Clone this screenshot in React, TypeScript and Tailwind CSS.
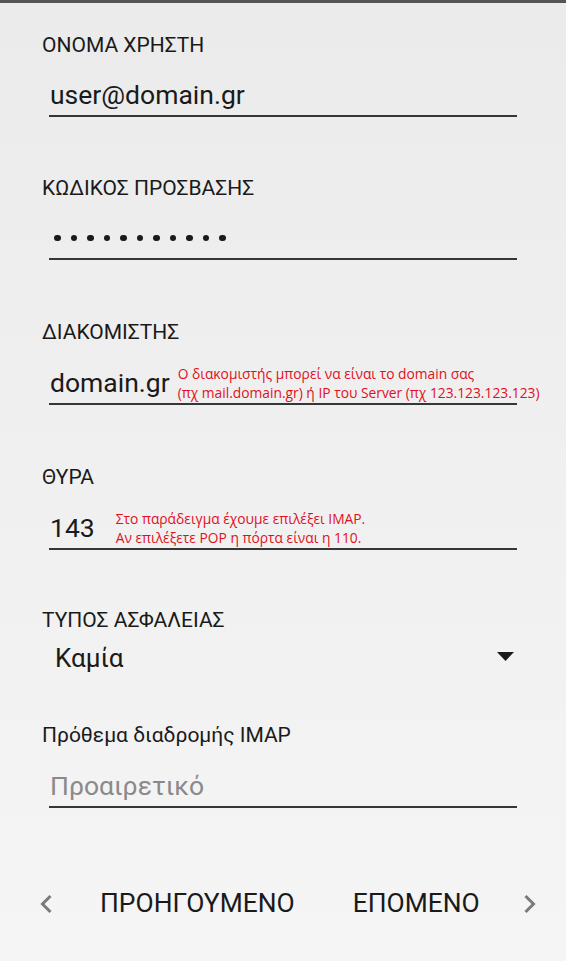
const roboto = { fontFamily: "Roboto, 'Noto Sans', sans-serif" };

const Label = ({ children, className = "" }: { children: React.ReactNode; className?: string }) => (
  <div className={`pl-[42px] h-[26px] leading-[26px] text-[21px] text-[#1a1a1a] ${className}`}>{children}</div>
);

const Note = ({ lines }: { lines: string[] }) => (
  <div
    className="flex flex-col text-[13.8px] leading-[19px] text-[#e0101c]"
    style={{ fontFamily: "'Open Sans', 'Noto Sans', sans-serif" }}
  >
    {lines.map((l) => (
      <span key={l} className="whitespace-nowrap">
        {l}
      </span>
    ))}
  </div>
);

const Field = ({ children, className = "" }: { children: React.ReactNode; className?: string }) => (
  <div
    className={`ml-[49px] w-[468px] h-[42px] border-b-2 border-[#363636] flex items-center text-[26.5px] text-[#1a1a1a] ${className}`}
  >
    {children}
  </div>
);

const Chevron = ({ dir }: { dir: "left" | "right" }) => (
  <svg width="14" height="22" viewBox="0 0 14 22" className="text-[#7a7a7a]">
    <path
      d={dir === "left" ? "M11.5 3 L3.5 11 L11.5 19" : "M2.5 3 L10.5 11 L2.5 19"}
      fill="none"
      stroke="currentColor"
      strokeWidth="3"
    />
  </svg>
);

export default function App() {
  return (
    <div className="w-full h-[961px] bg-gradient-to-b from-[#ebebeb] to-[#f5f5f5] flex flex-col" style={roboto}>
      <div className="h-[3px] bg-[#555555]" />

      <Label className="mt-[29px]">ΟΝΟΜΑ ΧΡΗΣΤΗ</Label>
      <Field className="mt-[17px] pl-px">user@domain.gr</Field>

      <Label className="mt-[58px]">ΚΩΔΙΚΟΣ ΠΡΟΣΒΑΣΗΣ</Label>
      <Field className="mt-[17px] pl-[5px] gap-[10px]">
        {Array.from({ length: 11 }).map((_, i) => (
          <div key={i} className="w-[6.5px] h-[6.5px] rounded-full bg-[#1a1a1a]" />
        ))}
      </Field>

      <Label className="mt-[59px]">ΔΙΑΚΟΜΙΣΤΗΣ</Label>
      <Field className="mt-[18px] pl-px gap-[8px]">
        <span>domain.gr</span>
        <Note
          lines={[
            "Ο διακομιστής μπορεί να είναι το domain σας",
            "(πχ mail.domain.gr) ή IP του Server (πχ 123.123.123.123)",
          ]}
        />
      </Field>

      <Label className="mt-[59px]">ΘΥΡΑ</Label>
      <Field className="mt-[18px] pl-px gap-[21px]">
        <span>143</span>
        <Note lines={["Στο παράδειγμα έχουμε επιλέξει IMAP.", "Αν επιλέξετε POP η πόρτα είναι η 110."]} />
      </Field>

      <Label className="mt-[57px]">ΤΥΠΟΣ ΑΣΦΑΛΕΙΑΣ</Label>
      <div className="mt-[9px] ml-[55px] w-[460px] h-8 flex items-center justify-between text-[26px] text-[#1a1a1a]">
        <span>Καμία</span>
        <svg width="17" height="9" viewBox="0 0 17 9" className="mr-[1px] -mt-[3px]">
          <path d="M0 0 H17 L8.5 9 Z" fill="#1a1a1a" />
        </svg>
      </div>

      <Label className="mt-[48px]">Πρόθεμα διαδρομής IMAP</Label>
      <Field className="mt-[18px] pl-px text-[#8a8a8a]">Προαιρετικό</Field>

      <div className="mt-[76px] flex items-center h-10 text-[26.4px] text-[#1a1a1a]">
        <div className="ml-[39px]">
          <Chevron dir="left" />
        </div>
        <span className="ml-[47px]">ΠΡΟΗΓΟΥΜΕΝΟ</span>
        <span className="ml-[58px]">ΕΠΟΜΕΝΟ</span>
        <div className="ml-[43px]">
          <Chevron dir="right" />
        </div>
      </div>
    </div>
  );
}
